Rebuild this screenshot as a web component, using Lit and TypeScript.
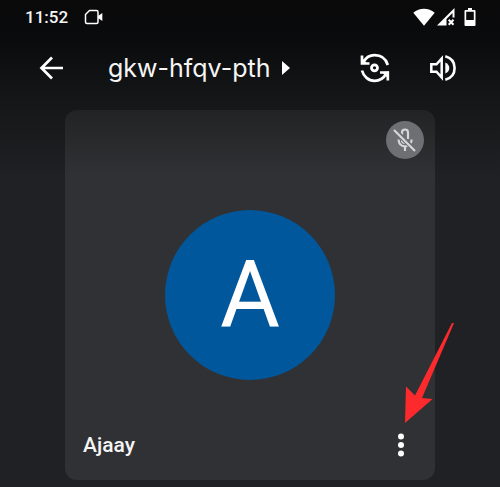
import { LitElement, html, css } from "lit";
import { customElement, property } from "lit/decorators.js";

@customElement("status-bar")
class StatusBar extends LitElement {
  static styles = css`
    :host {
      display: flex;
      align-items: center;
      justify-content: space-between;
      height: 34px;
      padding: 0 24px 0 25px;
    }
    .group {
      display: flex;
      align-items: center;
    }
    .left {
      gap: 16px;
    }
    .time {
      font-size: 17px;
      font-weight: 500;
      line-height: 24px;
    }
    svg {
      display: block;
    }
    .signal {
      margin: 0 9px 0 2px;
    }
  `;

  render() {
    return html`
      <div class="group left">
        <span class="time">11:52</span>
        <svg width="20" height="16" viewBox="0 0 20 16" aria-hidden="true">
          <path d="M5.5 1.5H12.5Q14 1.5 14 3V13Q14 14.5 12.5 14.5H3Q1.5 14.5 1.5 13V5.5Z" fill="none" stroke="#fff" stroke-width="1.5" stroke-linejoin="round" />
          <path d="M14 7L18.3 4V12L14 9Z" fill="#fff" />
        </svg>
      </div>
      <div class="group">
        <svg width="22" height="18" viewBox="0 0 22 18" aria-hidden="true">
          <path d="M0.3 4.7Q5 .7 11 .7T21.7 4.7L11 17.8Z" fill="#fff" />
        </svg>
        <svg class="signal" width="18" height="18" viewBox="0 0 18 18" aria-hidden="true">
          <path d="M0 17.6L17.5 0V9.5H15.5V5L9.5 11V17.6Z" fill="#fff" />
          <path d="M11.7 11.8L16.5 16.8M16.5 11.8L11.7 16.8" stroke="#fff" stroke-width="2" />
        </svg>
        <svg width="12" height="18" viewBox="0 0 12 18" aria-hidden="true">
          <path d="M4 0H8V2H10.5Q11.5 2 11.5 3V17Q11.5 18 10.5 18H1.5Q.5 18 .5 17V3Q.5 2 1.5 2H4ZM2.2 3.8V12H9.8V3.8Z" fill="#fff" fill-rule="evenodd" />
        </svg>
      </div>
    `;
  }
}

@customElement("call-header")
class CallHeader extends LitElement {
  @property() code = "";

  static styles = css`
    :host {
      display: flex;
      align-items: center;
      height: 68px;
      padding: 0 43px 0 36px;
    }
    button {
      display: flex;
      align-items: center;
      border: 0;
      padding: 0;
      background: none;
      color: inherit;
      font: inherit;
    }
    .code {
      flex: 1;
      gap: 12px;
      margin-left: 40px;
      font-family: Inter, "Liberation Sans", sans-serif;
      font-size: 25px;
      line-height: 32px;
    }
    .actions {
      display: flex;
      gap: 39px;
    }
    svg {
      display: block;
      fill: none;
      stroke: #fff;
      stroke-width: 3;
    }
    .solid {
      fill: #fff;
      stroke: none;
    }
  `;

  render() {
    return html`
      <button aria-label="Back">
        <svg width="32" height="32" viewBox="0 0 32 32"><path d="M27 16H6M16 5.5L5.5 16L16 26.5" stroke-width="2.7" /></svg>
      </button>
      <button class="code">
        <span>${this.code}</span>
        <svg class="solid" width="8" height="14" viewBox="0 0 8 14"><path d="M0 0L8 7L0 14Z" /></svg>
      </button>
      <div class="actions">
        <button aria-label="Switch camera">
          <svg width="30" height="30" viewBox="0 0 30 30">
            <path d="M2 2.5V10.5H9.5M3.5 9C6 4.5 10 2.2 14.5 2.2C21 2.2 26 6 27.8 12M2 17.5C3.5 23.5 8.5 27.8 14.5 27.8C19.5 27.8 23.5 25.5 26 21M20 19.5H27.8V27.5" stroke-width="2.7" />
            <path class="solid" d="M1 4L7.5 10.8H1ZM29 18.5V26L21.5 19Z" />
            <circle cx="14.5" cy="14.8" r="3" stroke-width="2.8" />
          </svg>
        </button>
        <button aria-label="Sound">
          <svg width="28" height="30" viewBox="0 0 28 30">
            <path d="M2.3 11.3H7.5L12.7 5.5V24.5L7.5 18.7H2.3Z" stroke-width="2.5" />
            <path class="solid" d="M16.3 9.5Q20.3 11.5 20.3 15T16.3 20.5Z" />
            <path d="M16.3 3.2C22 4.8 25.6 9.3 25.6 15S22 25.2 16.3 26.8" stroke-width="2.6" />
          </svg>
        </button>
      </div>
    `;
  }
}

@customElement("participant-tile")
class ParticipantTile extends LitElement {
  @property() name = "";

  static styles = css`
    :host {
      display: grid;
      grid-template-rows: 48px 1fr 48px;
      position: relative;
      box-sizing: border-box;
      aspect-ratio: 1;
      padding: 11px;
      border-radius: 12px;
      background: linear-gradient(#222324, #303134 64px);
    }
    .muted {
      display: grid;
      place-items: center;
      justify-self: end;
      width: 38px;
      height: 38px;
      border-radius: 50%;
      background: #6d6f72;
    }
    .avatar {
      display: grid;
      place-items: center;
      place-self: center;
      width: 170px;
      height: 170px;
      border-radius: 50%;
      background: #01579b;
      color: #fff;
      font-size: 92px;
      line-height: 92px;
    }
    .footer {
      display: flex;
      align-items: center;
      justify-content: space-between;
      padding: 0 7px;
    }
    .name {
      font-size: 21px;
      font-weight: 500;
      line-height: 24px;
    }
    button {
      border: 0;
      padding: 0;
      background: none;
    }
    svg {
      display: block;
    }
    .pointer {
      position: absolute;
      right: -20px;
      bottom: 56px;
    }
  `;

  render() {
    return html`
      <div class="muted">
        <svg width="26" height="26" viewBox="0 0 26 26" fill="none" stroke="#d6d7d9" stroke-width="2.2" aria-label="Microphone off">
          <path d="M10 8V5.5Q10 2.5 13 2.5T16 5.5V12M10 9V13Q10 16 13 16M6.5 12.5Q7 19.3 13 19.3T19.7 12.5M13 19.3V24" />
          <path d="M3 3.5L23 23.5" stroke="#6d6f72" stroke-width="5" />
          <path d="M2 3L23 24" />
        </svg>
      </div>
      <div class="avatar">${this.name.charAt(0)}</div>
      <div class="footer">
        <span class="name">${this.name}</span>
        <button aria-label="More options">
          <svg width="32" height="28" viewBox="0 0 32 28" fill="#fff">
            <circle cx="16" cy="5.5" r="3" /><circle cx="16" cy="14" r="3" /><circle cx="16" cy="22.5" r="3" />
          </svg>
        </button>
      </div>
      <svg class="pointer" width="52" height="102" viewBox="0 0 52 102" aria-hidden="true">
        <path d="M51 1L19 76L29.5 77L2 101L3 64.5L12 73.5L49 1Z" fill="#fc2a2d" />
      </svg>
    `;
  }
}

@customElement("app-root")
class AppRoot extends LitElement {
  static styles = css`
    :host {
      display: block;
      min-height: 100vh;
      box-sizing: border-box;
      padding-bottom: 8px;
      background: linear-gradient(#09090a, #0a0b0c 40px, #151617 100px, #202124 180px);
      color: #f5f5f5;
      font-family: Roboto, "Liberation Sans", sans-serif;
    }
    main {
      padding: 8px 13% 0;
    }
  `;

  render() {
    return html`
      <status-bar></status-bar>
      <call-header code="gkw-hfqv-pth"></call-header>
      <main><participant-tile name="Ajaay"></participant-tile></main>
    `;
  }
}
